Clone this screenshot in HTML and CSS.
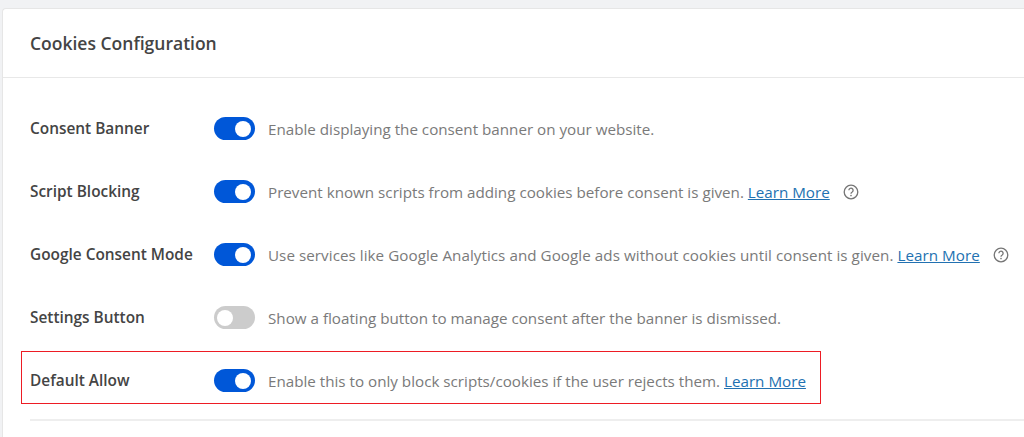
FILE: index.html
```html
<!DOCTYPE html>
<html lang="en">
<head>
  <meta charset="UTF-8">
  <meta name="viewport" content="width=device-width, initial-scale=1.0">
  <title>Cookies Configuration</title>
  <link rel="stylesheet" href="styles.css">
</head>
<body>

  <div class="card">
    <div class="card-header">
      <h2>Cookies Configuration</h2>
    </div>

    <div class="card-body">
      <div class="row">
        <div class="label">Consent Banner</div>
        <span class="toggle on"></span>
        <p class="desc">Enable displaying the consent banner on your website.</p>
      </div>

      <div class="row">
        <div class="label">Script Blocking</div>
        <span class="toggle on"></span>
        <p class="desc">Prevent known scripts from adding cookies before consent is given. <a href="#">Learn More</a></p>
        <svg class="help" viewBox="0 0 16 16" aria-hidden="true">
          <circle cx="8" cy="8" r="6.8"/>
          <path d="M5.9 6.3a2.1 2.1 0 1 1 3.3 1.7c-.8.5-1.2.9-1.2 1.8"/>
          <circle class="dot" cx="8" cy="11.6" r=".8"/>
        </svg>
      </div>

      <div class="row">
        <div class="label">Google Consent Mode</div>
        <span class="toggle on"></span>
        <p class="desc long">Use services like Google Analytics and Google ads without cookies until consent is given. <a href="#">Learn More</a></p>
        <svg class="help" viewBox="0 0 16 16" aria-hidden="true">
          <circle cx="8" cy="8" r="6.8"/>
          <path d="M5.9 6.3a2.1 2.1 0 1 1 3.3 1.7c-.8.5-1.2.9-1.2 1.8"/>
          <circle class="dot" cx="8" cy="11.6" r=".8"/>
        </svg>
      </div>

      <div class="row">
        <div class="label">Settings Button</div>
        <span class="toggle"></span>
        <p class="desc">Show a floating button to manage consent after the banner is dismissed.</p>
      </div>

      <div class="row">
        <div class="label">Default Allow</div>
        <span class="toggle on"></span>
        <p class="desc">Enable this to only block scripts/cookies if the user rejects them. <a href="#">Learn More</a></p>
      </div>

      <div class="divider"></div>
    </div>
  </div>

  <!-- red annotation round the last row -->
  <div class="highlight"></div>

</body>
</html>
```

FILE: styles.css
```css
html, body {
  height: 100%;
}
body {
  font-family: "Open Sans", Arial, sans-serif;
  margin: 0;
  padding: 8px 0 0 2px;
  box-sizing: border-box;
  background-color: #f1f2f4;
  overflow: hidden;
  position: relative;
}
.card {
  background-color: white;
  border: 1px solid #e6e6e6;
  border-right: none;
  border-radius: 4px 0 0 0;
  height: 100%;
}
.card-header {
  height: 68px;
  padding-left: 27px;
  display: flex;
  align-items: center;
  border-bottom: 1px solid #e8e8e8;
}
.card-header h2 {
  margin: 0;
  font-size: 17.5px;
  font-weight: 600;
  color: #444;
}
.card-body {
  padding: 19px 0 0 27px;
}
.row {
  display: flex;
  align-items: center;
  height: 63px;
}
.label {
  width: 184px;
  font-size: 15.4px;
  font-weight: 600;
  color: #444;
  flex-shrink: 0;
  margin-bottom: 1px;
}
.toggle {
  width: 41px;
  height: 23px;
  border-radius: 12px;
  background-color: #ccc;
  position: relative;
  flex-shrink: 0;
}
.toggle::after {
  content: "";
  position: absolute;
  top: 3.5px;
  left: 3px;
  width: 16px;
  height: 16px;
  border-radius: 50%;
  background-color: white;
}
.toggle.on {
  background-color: #0057d8;
}
.toggle.on::after {
  left: 21px;
}
.desc {
  margin: 0 0 0 13px;
  font-size: 15.2px;
  color: #7a7a7a;
  white-space: nowrap;
}
.desc.long {
  letter-spacing: 0.05px;
}
.desc a {
  color: #2271b1;
}
.help {
  width: 16px;
  height: 16px;
  margin-left: 13px;
  fill: none;
  stroke: #757575;
  stroke-width: 1.3;
  flex-shrink: 0;
}
.help .dot {
  fill: #757575;
  stroke: none;
}
.divider {
  height: 2px;
  background-color: #eee;
  margin-top: 7px;
}
.highlight {
  position: absolute;
  left: 21px;
  top: 351px;
  width: 798px;
  height: 51px;
  border: 1px solid #ed1c24;
}
```
